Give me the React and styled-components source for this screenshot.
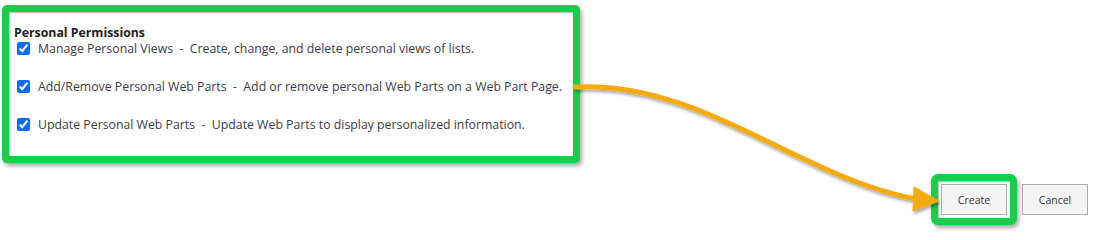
import React from 'react';
import styled, { createGlobalStyle } from 'styled-components';

const GlobalStyle = createGlobalStyle`
  body {
    margin: 0;
    background: #ffffff;
    font-family: "Open Sans", "Noto Sans", sans-serif;
  }
`;

const Page = styled.div`
  position: relative;
  width: 1101px;
  height: 240px;
  overflow: hidden;
  display: flex;
  flex-direction: column;
`;

const Highlight = styled.div`
  border: 7px solid #13cf49;
  border-radius: 5px;
  box-shadow: 2px 3px 4px rgba(0, 0, 0, 0.35), inset 1px 1px 2px rgba(0, 0, 0, 0.3);
  background: #ffffff;
`;

const Panel = styled(Highlight)`
  width: 559px;
  margin: 5px 0 0 2px;
  padding: 12px 0 22px 5px;
`;

const Title = styled.h3`
  margin: 0 0 -2px;
  font-size: 12.3px;
  font-weight: 700;
  color: #222;
  line-height: 17px;
`;

const Row = styled.label`
  display: flex;
  align-items: center;
  gap: 8px;
  height: 19px;
  margin-left: 3px;
  margin-bottom: 19px;
  font-size: 12.3px;
  color: #3b3b4a;
  &:last-child {
    margin-bottom: 0;
  }
`;

const Check = styled.input`
  width: 13px;
  height: 13px;
  margin: 0;
  accent-color: #0a6cf0;
`;

const Actions = styled.div`
  display: flex;
  justify-content: flex-end;
  align-items: center;
  gap: 5px;
  margin-top: 11px;
  padding-right: 13px;
`;

const ButtonRing = styled(Highlight)`
  padding: 3px;
  border-radius: 7px;
`;

const Button = styled.button`
  width: 66px;
  height: 31px;
  background: #f4f4f4;
  border: 1px solid #ababab;
  font-family: inherit;
  font-size: 10.5px;
  color: #333;
  padding: 0;
`;

const Arrow = styled.svg`
  position: absolute;
  left: 0;
  top: 0;
  pointer-events: none;
`;

const permissions = [
  ['Manage Personal Views', 'Create, change, and delete personal views of lists.'],
  ['Add/Remove Personal Web Parts', 'Add or remove personal Web Parts on a Web Part Page.'],
  ['Update Personal Web Parts', 'Update Web Parts to display personalized information.'],
];

export default function App() {
  return (
    <Page>
      <GlobalStyle />
      <Panel>
        <Title>Personal Permissions</Title>
        {permissions.map(([name, desc]) => (
          <Row key={name}>
            <Check type="checkbox" checked readOnly />
            <span>{name}&nbsp; - &nbsp;{desc}</span>
          </Row>
        ))}
      </Panel>
      <Actions>
        <ButtonRing>
          <Button>Create</Button>
        </ButtonRing>
        <Button>Cancel</Button>
      </Actions>
      <Arrow width="1101" height="240" viewBox="0 0 1101 240">
        <defs>
          <filter id="sh" x="-10%" y="-10%" width="120%" height="140%">
            <feDropShadow dx="1.5" dy="2.5" stdDeviation="1.5" floodColor="#000" floodOpacity="0.35" />
          </filter>
        </defs>
        <g filter="url(#sh)" fill="#f6aa0c" stroke="#f6aa0c">
          <path d="M575,87 C700,80 800,178 916,199" fill="none" strokeWidth="5" strokeLinecap="round" />
          <path d="M914,187 L939,201 L913,211 Z" strokeWidth="1" strokeLinejoin="round" />
        </g>
      </Arrow>
    </Page>
  );
}
